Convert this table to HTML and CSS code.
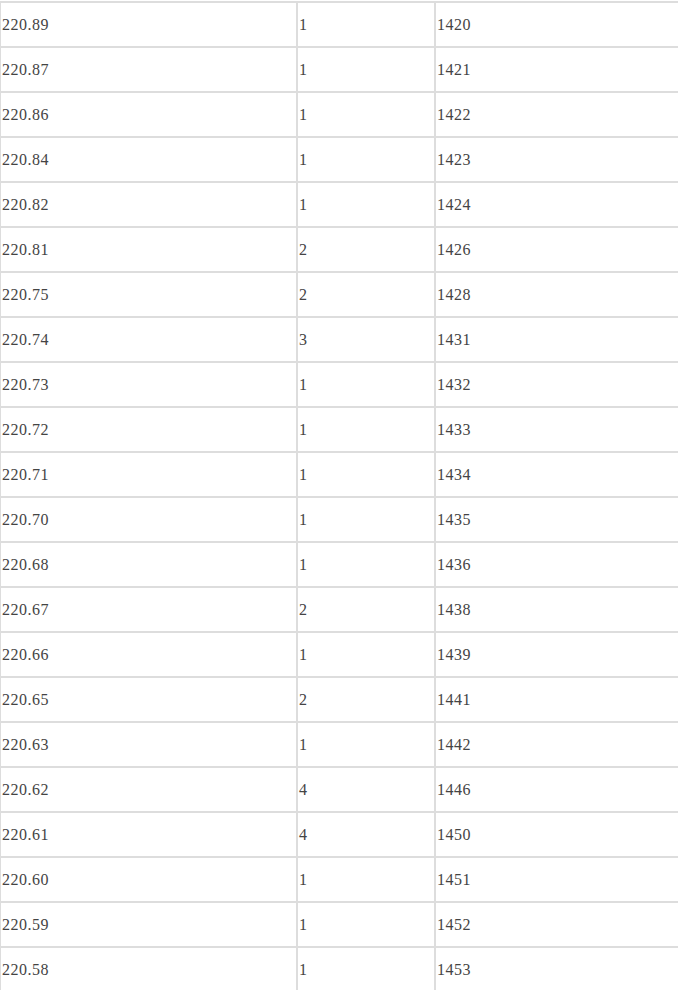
FILE: index.html
```html
<!DOCTYPE html>
<html>
<head>
<meta charset="utf-8">
<link rel="stylesheet" href="styles.css">
</head>
<body>
<table class="data">
<colgroup><col class="c1"><col class="c2"><col class="c3"></colgroup>
<tbody>
<tr><td>220.89</td><td>1</td><td>1420</td></tr>
<tr><td>220.87</td><td>1</td><td>1421</td></tr>
<tr><td>220.86</td><td>1</td><td>1422</td></tr>
<tr><td>220.84</td><td>1</td><td>1423</td></tr>
<tr><td>220.82</td><td>1</td><td>1424</td></tr>
<tr><td>220.81</td><td>2</td><td>1426</td></tr>
<tr><td>220.75</td><td>2</td><td>1428</td></tr>
<tr><td>220.74</td><td>3</td><td>1431</td></tr>
<tr><td>220.73</td><td>1</td><td>1432</td></tr>
<tr><td>220.72</td><td>1</td><td>1433</td></tr>
<tr><td>220.71</td><td>1</td><td>1434</td></tr>
<tr><td>220.70</td><td>1</td><td>1435</td></tr>
<tr><td>220.68</td><td>1</td><td>1436</td></tr>
<tr><td>220.67</td><td>2</td><td>1438</td></tr>
<tr><td>220.66</td><td>1</td><td>1439</td></tr>
<tr><td>220.65</td><td>2</td><td>1441</td></tr>
<tr><td>220.63</td><td>1</td><td>1442</td></tr>
<tr><td>220.62</td><td>4</td><td>1446</td></tr>
<tr><td>220.61</td><td>4</td><td>1450</td></tr>
<tr><td>220.60</td><td>1</td><td>1451</td></tr>
<tr><td>220.59</td><td>1</td><td>1452</td></tr>
<tr><td>220.58</td><td>1</td><td>1453</td></tr>
</tbody>
</table>
</body>
</html>
```
FILE: styles.css
```css
html, body {
  margin: 0;
  padding: 0;
  background: #fff;
}
body {
  overflow: hidden;
}
.data {
  border-collapse: collapse;
  table-layout: fixed;
  width: 679px;
  margin: 1px 0 0 -1px;
  font-family: "Liberation Serif", "Noto Sans CJK SC", serif;
  font-size: 16px;
  letter-spacing: 0.5px;
  color: #444;
}
.c1 { width: 297px; }
.c2 { width: 138px; }
.c3 { width: 244px; }
.data td {
  border: 2px solid #ddd;
  height: 43px;
  padding: 0 0 0 1px;
  vertical-align: middle;
  text-align: left;
  white-space: nowrap;
}
```
